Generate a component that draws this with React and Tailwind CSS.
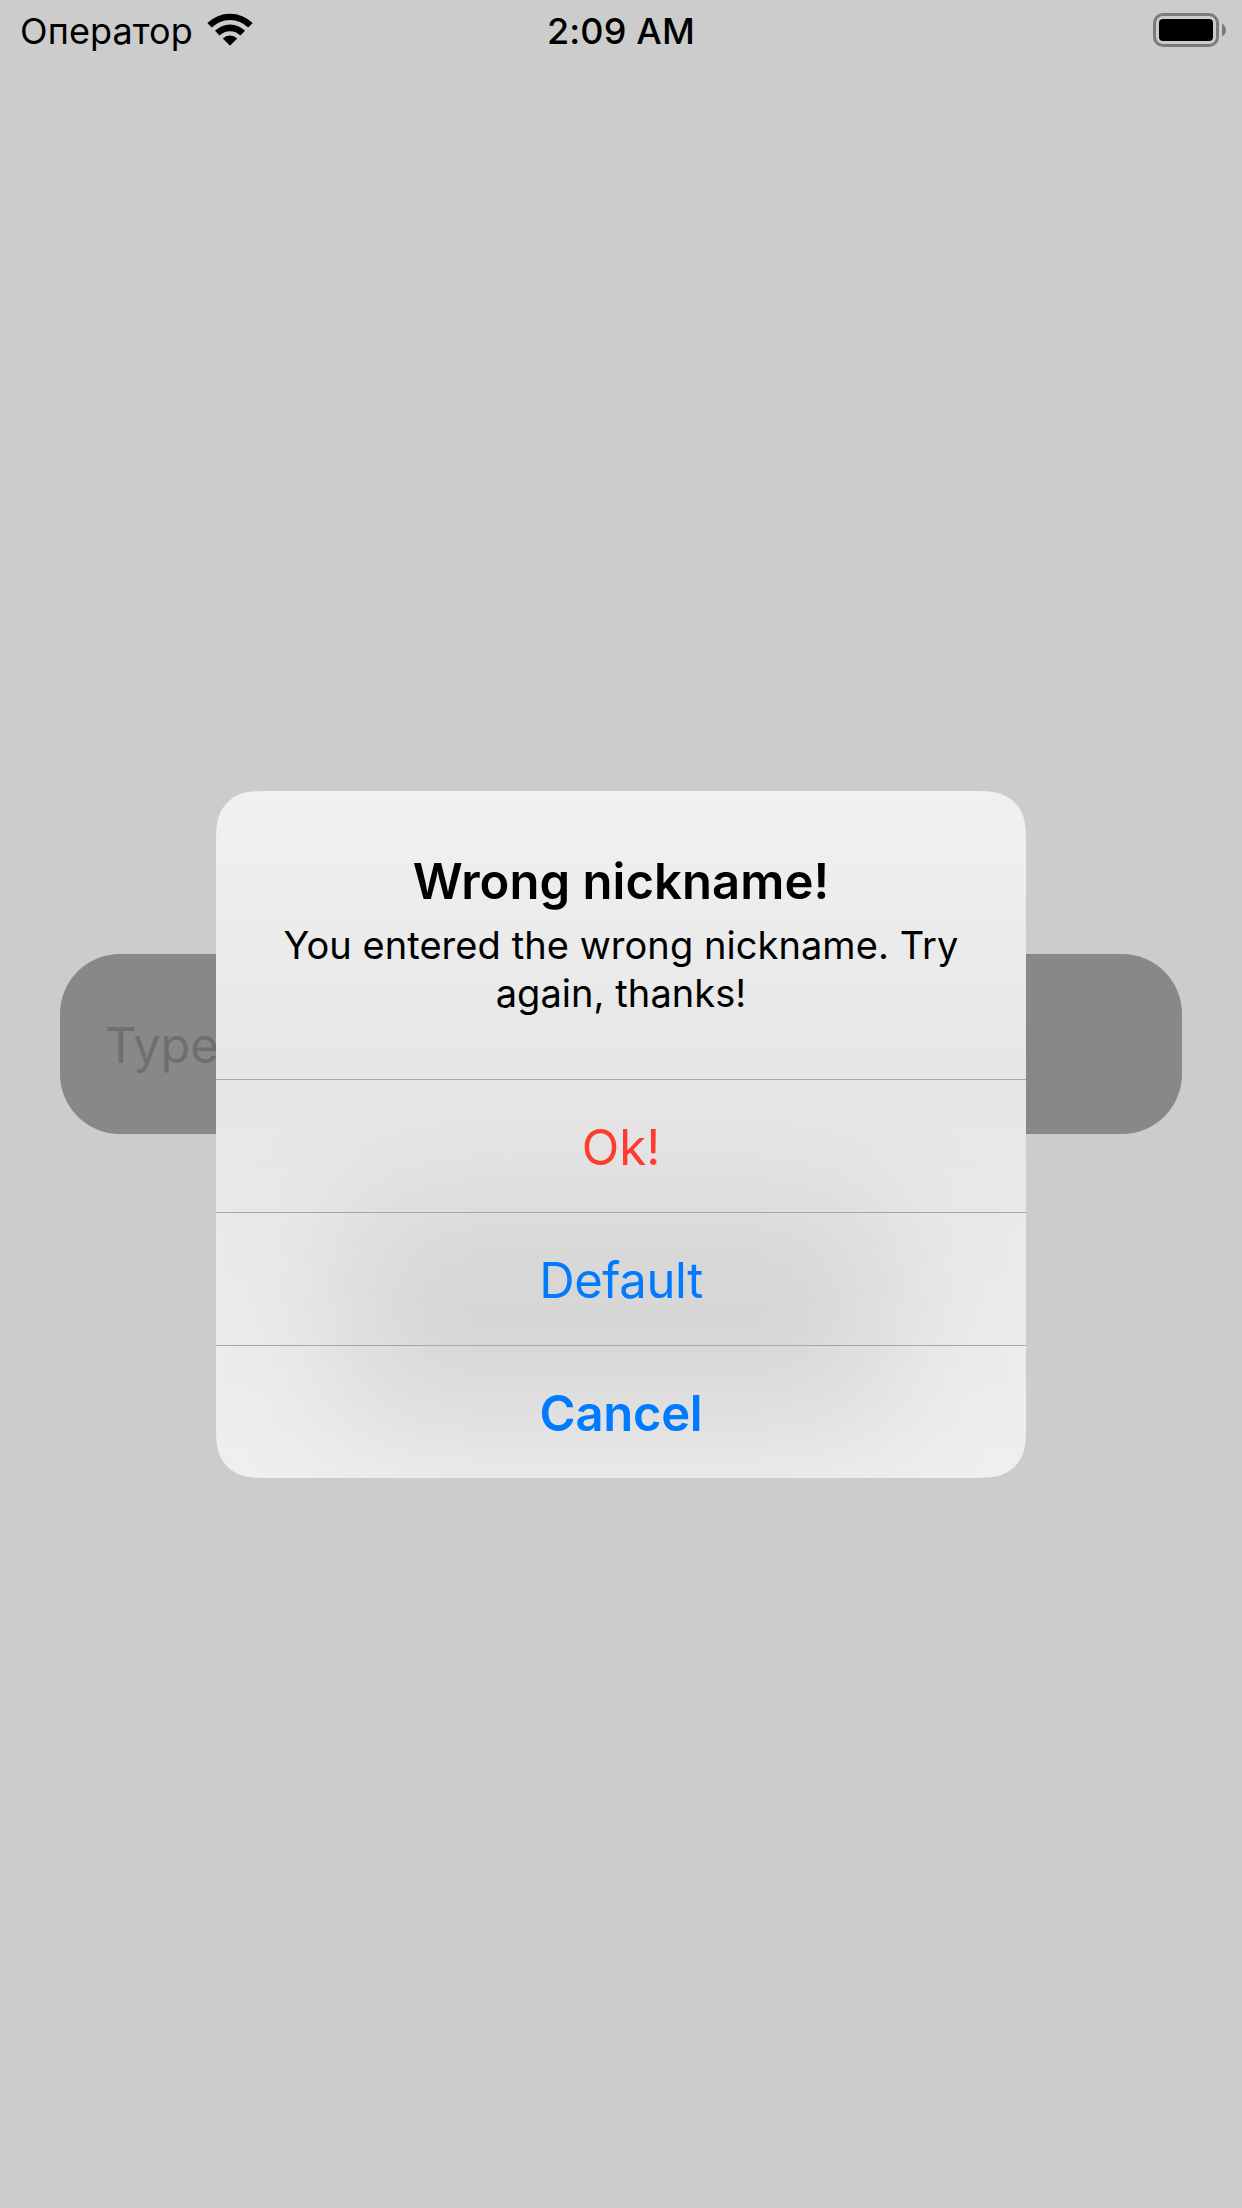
function Wifi() {
  return (
    <svg className="ml-[15px] mt-[13px] h-[33px] w-[46px]" viewBox="0 0 46 33" aria-hidden="true">
      <path d="M0.3 10.1 A32.2 32.2 0 0 1 45.7 10.1 L41.2 14.6 A25.8 25.8 0 0 0 4.8 14.6 Z" />
      <path d="M8 17.8 A21.2 21.2 0 0 1 38 17.8 L33.4 22.4 A14.8 14.8 0 0 0 12.6 22.4 Z" />
      <path d="M15.8 25.6 A10.2 10.2 0 0 1 30.2 25.6 L24 31.8 Q23 32.8 22 31.8 Z" />
    </svg>
  );
}

function Battery() {
  return (
    <svg className="mt-[13px] h-[34px] w-[74px]" viewBox="0 0 74 34" aria-hidden="true">
      <rect x="1.5" y="1.5" width="63" height="31" rx="8.5" fill="none" stroke="#7b7b7b" strokeWidth="3" />
      <rect x="6" y="6" width="54" height="22" rx="4" />
      <path d="M69 10.5 Q73 13 73 17 Q73 21 69 23.5 Z" fill="#7b7b7b" />
    </svg>
  );
}

function StatusBar() {
  return (
    <header className="grid h-[60px] grid-cols-3 text-[36px] leading-[60px] text-black">
      <div className="flex pl-5">
        <span className="mt-[1px] w-[172px] whitespace-nowrap tracking-[0.1px]">Оператор</span>
        <Wifi />
      </div>
      <div className="mt-[1px] text-center font-medium tracking-[0.15px]">2:09 AM</div>
      <div className="flex justify-end pr-[15px]">
        <Battery />
      </div>
    </header>
  );
}

const actions = [
  { label: "Ok!", style: "text-[#ff3b30]" },
  { label: "Default", style: "tracking-[-0.4px] text-[#007aff]" },
  { label: "Cancel", style: "font-semibold tracking-[-0.3px] text-[#007aff]" },
];

function Alert() {
  return (
    <div
      role="alertdialog"
      className="absolute left-[216px] top-[791px] flex h-[687px] w-[810px] flex-col bg-[linear-gradient(to_bottom,#f0f1f0_0%,#eaebea_22%,#e5e6e5_42%,#e8e9e8_60%,#eaebea_75%,#eeefee_100%)] [clip-path:path('M59.6_0L750.4_0C767.55_0_776.13_0_785.37_2.92C795.46_6.59_803.41_14.54_807.08_24.63C810_33.87_810_42.45_810_59.6L810_627.4C810_644.55_810_653.13_807.08_662.37C803.41_672.46_795.46_680.41_785.37_684.08C776.13_687_767.55_687_750.4_687L59.6_687C42.45_687_33.87_687_24.63_684.08C14.54_680.41_6.59_672.46_2.92_662.37C0_653.13_0_644.55_0_627.4L0_59.6C0_42.45_0_33.87_2.92_24.63C6.59_14.54_14.54_6.59_24.63_2.92C33.87_0_42.45_0_59.6_0Z')]"
    >
      <div className="absolute left-[130px] top-[410px] h-[230px] w-[540px] bg-black/9 blur-[65px]" />
      <div className="relative flex h-[288px] flex-col items-center pt-[60px] text-center text-black">
        <h1 className="text-[49px] font-semibold leading-[61px] tracking-[0.05px]">Wrong nickname!</h1>
        <p className="mt-[9px] whitespace-nowrap text-[38px] leading-[48px] tracking-[0.06px]">
          You entered the wrong nickname. Try
          <br />
          again, thanks!
        </p>
      </div>
      {actions.map(({ label, style }) => (
        <button
          key={label}
          className={`relative h-[133px] border-t border-[#a5a6a6] pt-[2px] text-[49px] leading-none ${style}`}
        >
          {label}
        </button>
      ))}
    </div>
  );
}

export default function App() {
  return (
    <main className="relative flex h-[2208px] w-[1242px] flex-col overflow-hidden bg-[#cccccc] font-['Inter',sans-serif]">
      <StatusBar />
      <div className="mx-[60px] mt-[894px] flex h-[180px] items-center rounded-[60px] bg-[#888888] pl-[45px] pt-[3px] text-[49px] tracking-[-0.3px] text-[#6f6f6f]">
        Type
      </div>
      <Alert />
    </main>
  );
}
